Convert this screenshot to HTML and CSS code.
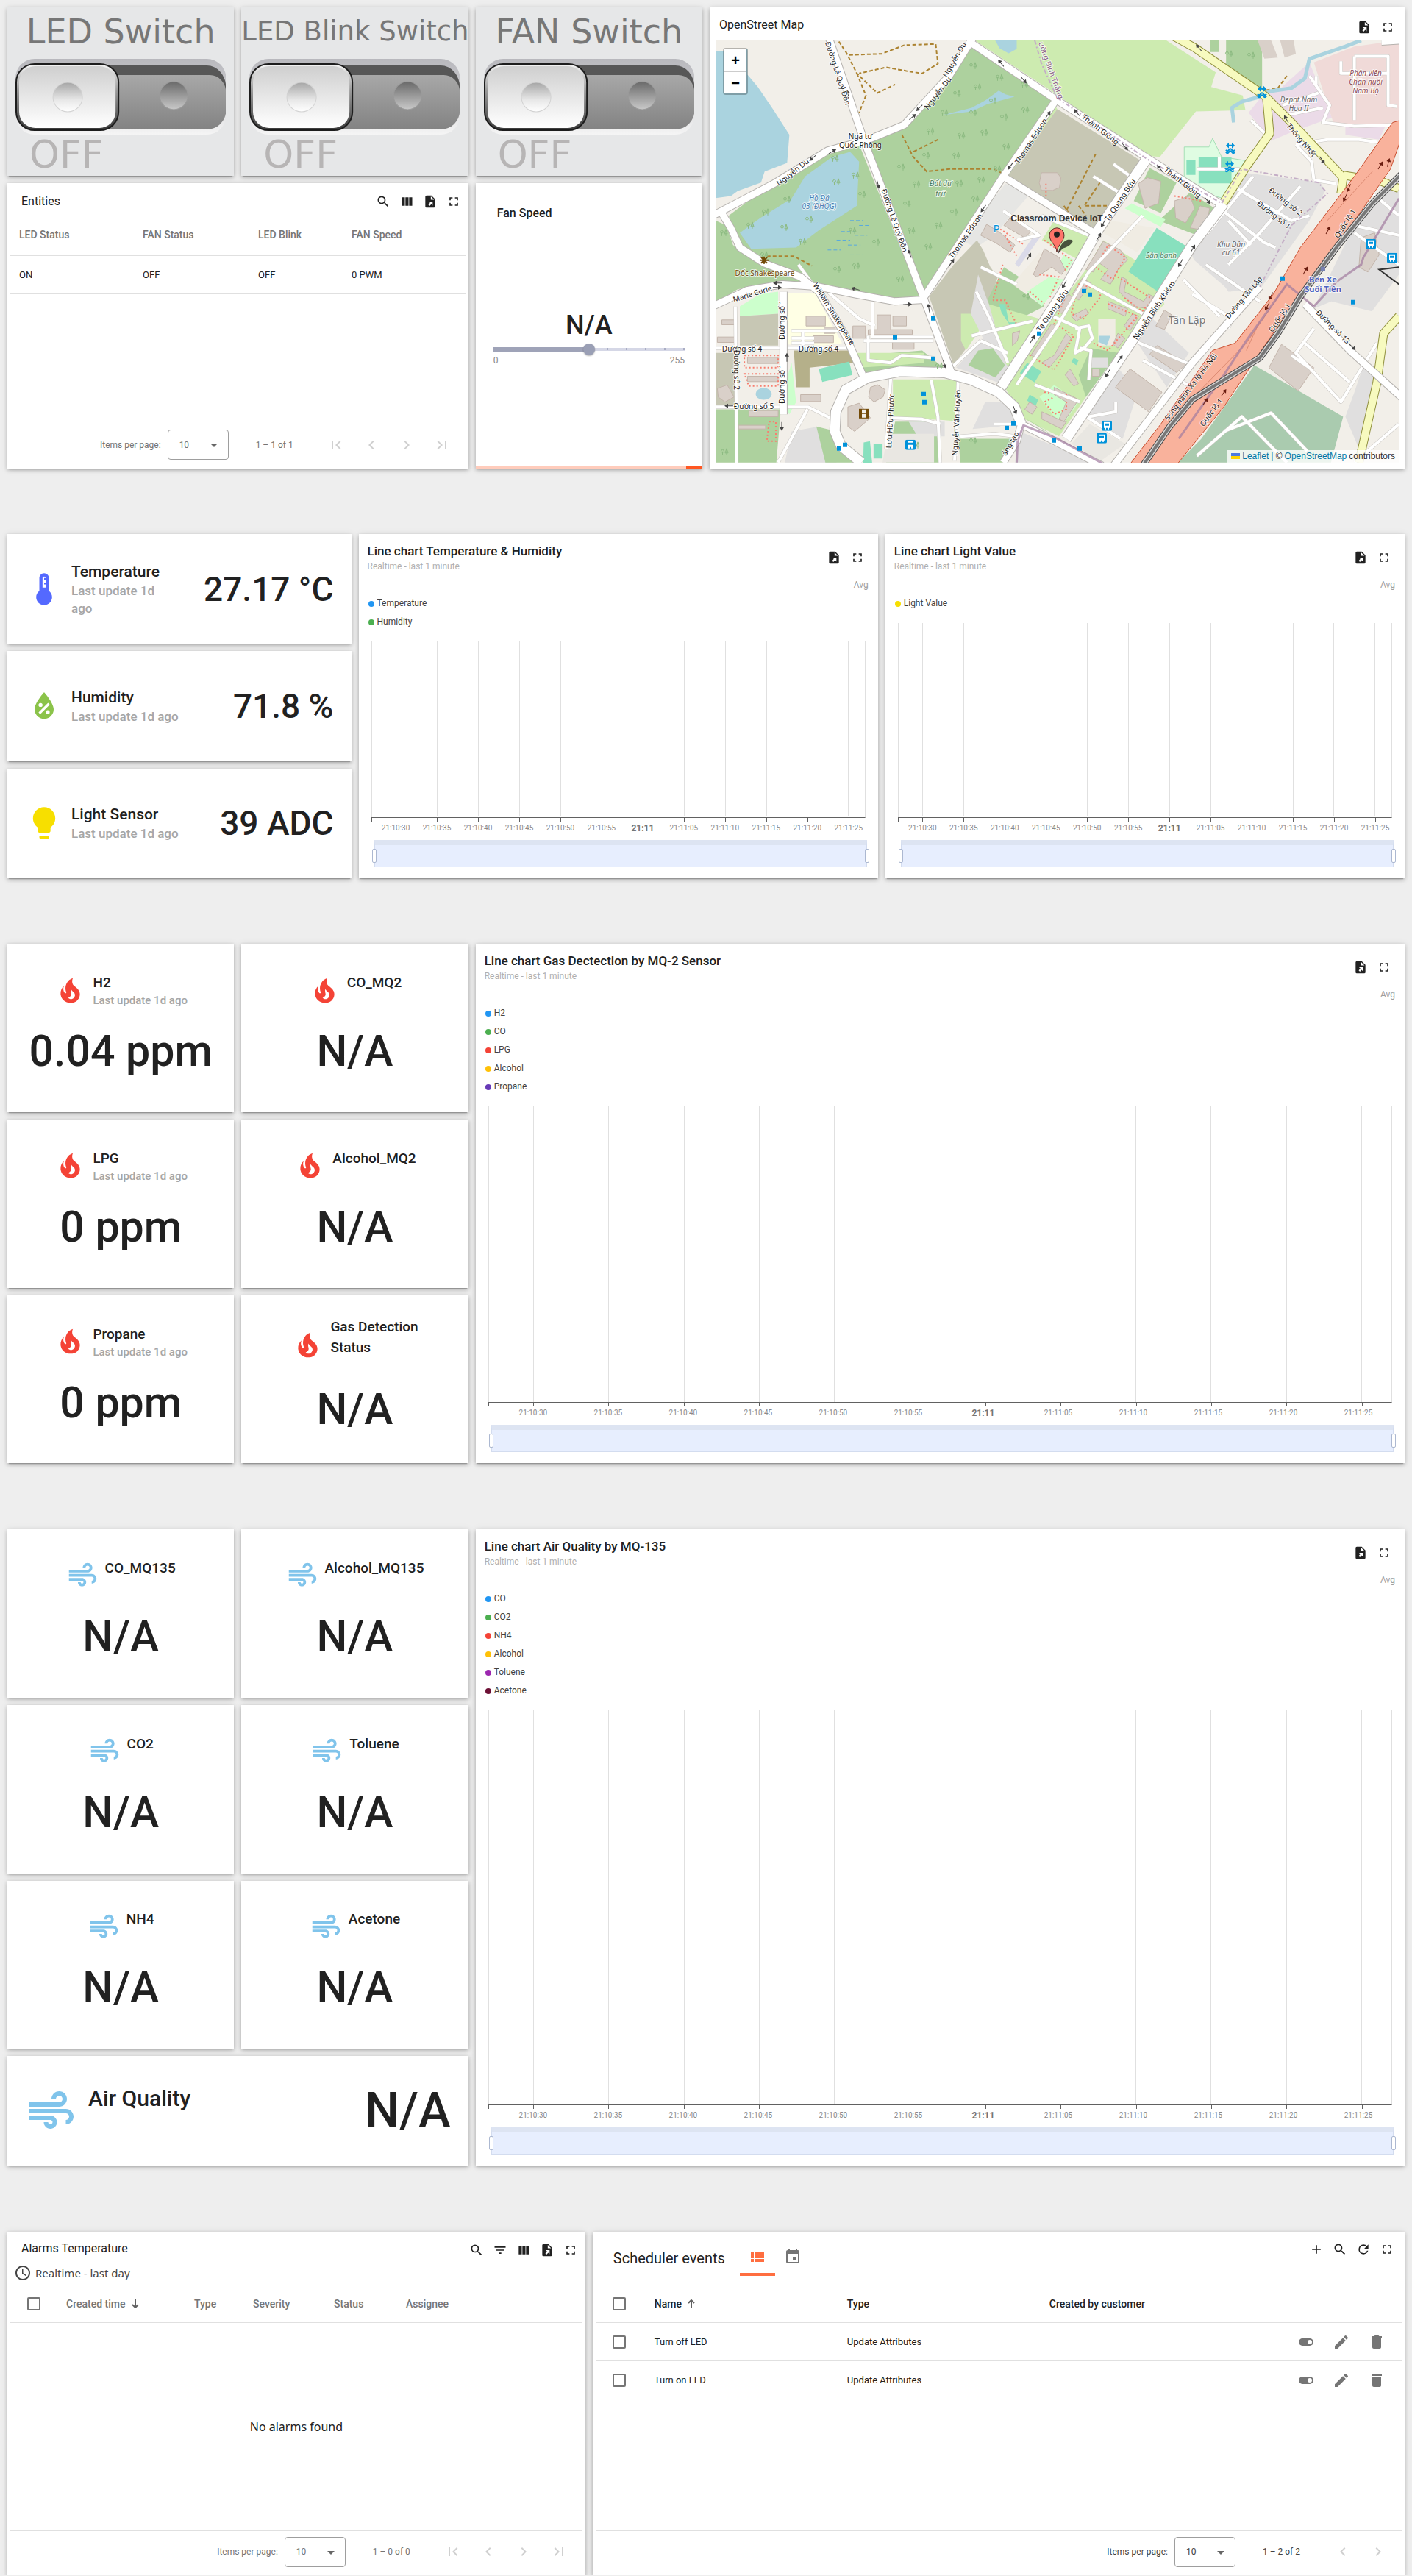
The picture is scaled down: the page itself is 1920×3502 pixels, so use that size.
FILE: index.html
```html
<!DOCTYPE html>
<html lang="en">
<head>
<meta charset="utf-8">
<title>Classroom IoT Dashboard</title>
<link rel="stylesheet" href="styles.css">
</head>
<body>
<svg class="defs" aria-hidden="true">
  <defs>
    <symbol id="i-search" viewBox="0 0 24 24"><path d="M15.5 14h-.79l-.28-.27A6.47 6.47 0 0 0 16 9.5 6.5 6.5 0 1 0 9.5 16c1.61 0 3.09-.59 4.23-1.57l.27.28v.79l5 4.99L20.49 19l-4.99-5zm-6 0C7.01 14 5 11.99 5 9.5S7.01 5 9.5 5 14 7.01 14 9.5 11.99 14 9.5 14z"/></symbol>
    <symbol id="i-columns" viewBox="0 0 24 24"><path d="M10 19h5V5h-5v14zm-6 0h5V5H4v14zM16 5v14h5V5h-5z"/></symbol>
    <symbol id="i-filter" viewBox="0 0 24 24"><path d="M10 18h4v-2h-4v2zM3 6v2h18V6H3zm3 7h12v-2H6v2z"/></symbol>
    <symbol id="i-export" viewBox="0 0 24 24"><path d="M14 2H6a2 2 0 0 0-2 2v16a2 2 0 0 0 2 2h12a2 2 0 0 0 2-2V8l-6-6zm2 16.5-2.2-2.2-2.8 2.8L9 17l2.8-2.8L9.500 12H16v6.500zM13 9V3.500L18.500 9H13z"/></symbol>
    <symbol id="i-full" viewBox="0 0 24 24"><path d="M7 14H5v5h5v-2H7v-3zm-2-4h2V7h3V5H5v5zm12 7h-3v2h5v-5h-2v3zM14 5v2h3v3h2V5h-5z"/></symbol>
    <symbol id="i-plus" viewBox="0 0 24 24"><path d="M19 13h-6v6h-2v-6H5v-2h6V5h2v6h6v2z"/></symbol>
    <symbol id="i-refresh" viewBox="0 0 24 24"><path d="M17.650 6.350A7.960 7.960 0 0 0 12 4a8 8 0 1 0 7.730 10h-2.080A6 6 0 1 1 12 6c1.660 0 3.140.69 4.220 1.780L13 11h7V4l-2.350 2.350z"/></symbol>
    <symbol id="i-clock" viewBox="0 0 24 24"><path d="M11.990 2C6.470 2 2 6.480 2 12s4.470 10 9.990 10C17.520 22 22 17.520 22 12S17.520 2 11.990 2zM12 20a8 8 0 1 1 0-16 8 8 0 0 1 0 16zm.5-13H11v6l5.250 3.150.75-1.230-4.500-2.670z"/></symbol>
    <symbol id="i-list" viewBox="0 0 24 24"><path d="M3 14h4v-4H3v4zm0 5h4v-4H3v4zM3 9h4V5H3v4zm5 5h13v-4H8v4zm0 5h13v-4H8v4zM8 5v4h13V5H8z"/></symbol>
    <symbol id="i-event" viewBox="0 0 24 24"><path d="M17 12h-5v5h5v-5zM16 1v2H8V1H6v2H5c-1.110 0-1.990.9-1.990 2L3 19a2 2 0 0 0 2 2h14c1.100 0 2-.9 2-2V5c0-1.100-.9-2-2-2h-1V1h-2zm3 18H5V8h14v11z"/></symbol>
    <symbol id="i-toggle" viewBox="0 0 24 24"><path fill-rule="evenodd" d="M17 7H7a5 5 0 0 0 0 10h10a5 5 0 0 0 0-10zm0 8a3 3 0 1 1 0-6 3 3 0 0 1 0 6z"/></symbol>
    <symbol id="i-edit" viewBox="0 0 24 24"><path d="M3 17.250V21h3.750L17.810 9.940l-3.750-3.750L3 17.250zM20.710 7.040a1 1 0 0 0 0-1.410l-2.340-2.340a1 1 0 0 0-1.410 0l-1.830 1.830 3.750 3.750 1.830-1.830z"/></symbol>
    <symbol id="i-trash" viewBox="0 0 24 24"><path d="M6 19c0 1.100.9 2 2 2h8c1.100 0 2-.9 2-2V7H6v12zM19 4h-3.500l-1-1h-5l-1 1H5v2h14V4z"/></symbol>
    <symbol id="i-first" viewBox="0 0 24 24"><path d="M18.410 16.590 13.820 12l4.590-4.590L17 6l-6 6 6 6zM6 6h2v12H6z"/></symbol>
    <symbol id="i-prev" viewBox="0 0 24 24"><path d="M15.410 7.410 14 6l-6 6 6 6 1.410-1.410L10.830 12z"/></symbol>
    <symbol id="i-next" viewBox="0 0 24 24"><path d="M10 6 8.590 7.410 13.170 12l-4.580 4.590L10 18l6-6z"/></symbol>
    <symbol id="i-last" viewBox="0 0 24 24"><path d="M5.590 7.410 10.180 12l-4.590 4.590L7 18l6-6-6-6zM16 6h2v12h-2z"/></symbol>
    <symbol id="i-caret" viewBox="0 0 10 5"><path d="M0 0h10L5 5z"/></symbol>
    <symbol id="i-up" viewBox="0 0 12 12"><path d="M6 12V1M2 5l4-4 4 4" fill="none" stroke="currentColor" stroke-width="2"/></symbol>
    <symbol id="i-down" viewBox="0 0 12 12"><path d="M6 0v11M2 7l4 4 4-4" fill="none" stroke="currentColor" stroke-width="2"/></symbol>
    <symbol id="i-thermo" viewBox="0 0 24 24"><path d="M15 13V5c0-1.660-1.340-3-3-3S9 3.340 9 5v8c-1.210.91-2 2.370-2 4 0 2.760 2.240 5 5 5s5-2.240 5-5c0-1.630-.79-3.090-2-4zm-4-8c0-.55.45-1 1-1s1 .45 1 1h-1v1h1v2h-1v1h1v2h-2V5z"/></symbol>
    <symbol id="i-drop" viewBox="0 0 24 24"><path d="M12 3.250S6 10 6 14c0 3.320 2.690 6 6 6a6 6 0 0 0 6-6c0-4-6-10.750-6-10.750zm2.470 6.720 1.060 1.060-6 6-1.060-1.060zM9.750 10a1.250 1.250 0 1 1 0 2.500 1.250 1.250 0 0 1 0-2.500zm4.500 4.500a1.250 1.250 0 1 1 0 2.500 1.250 1.250 0 0 1 0-2.500z" fill-rule="evenodd"/></symbol>
    <symbol id="i-bulb" viewBox="0 0 24 24"><path d="M9 21c0 .55.45 1 1 1h4c.55 0 1-.45 1-1v-1H9v1zm3-19C8.140 2 5 5.140 5 9c0 2.380 1.190 4.470 3 5.740V17c0 .55.45 1 1 1h6c.55 0 1-.45 1-1v-2.260c1.810-1.270 3-3.360 3-5.740 0-3.860-3.140-7-7-7z"/></symbol>
    <symbol id="i-fire" viewBox="0 0 24 24"><path fill-rule="evenodd" d="M17.66 11.2C17.43 10.9 17.15 10.64 16.89 10.38C16.22 9.78 15.46 9.35 14.82 8.72C13.33 7.26 13 4.85 13.95 3C13 3.23 12.17 3.75 11.46 4.32C8.87 6.4 7.85 10.07 9.07 13.22C9.11 13.32 9.15 13.42 9.15 13.55C9.15 13.77 9 13.97 8.8 14.05C8.57 14.15 8.33 14.09 8.14 13.93C8.08 13.88 8.04 13.83 8 13.76C6.87 12.33 6.69 10.28 7.45 8.64C5.78 10 4.87 12.3 5 14.47C5.06 14.97 5.12 15.47 5.29 15.97C5.43 16.57 5.7 17.17 6 17.7C7.08 19.43 8.95 20.67 10.96 20.92C13.1 21.19 15.39 20.8 17.03 19.32C18.86 17.66 19.5 15 18.56 12.72L18.43 12.46C18.22 12 17.66 11.2 17.66 11.2M14.5 17.5C14.22 17.74 13.76 18 13.4 18.1C12.28 18.5 11.16 17.94 10.5 17.28C11.69 17 12.4 16.12 12.61 15.23C12.78 14.43 12.46 13.77 12.33 13C12.21 12.26 12.23 11.63 12.5 10.94C12.69 11.32 12.89 11.7 13.13 12C13.9 13 15.11 13.44 15.37 14.8C15.41 14.94 15.43 15.08 15.43 15.23C15.46 16.05 15.1 16.95 14.5 17.5Z"/></symbol>
    <symbol id="i-air" viewBox="0 0 24 24"><path d="M14.500 17c0 1.650-1.350 3-3 3s-3-1.350-3-3h2c0 .55.45 1 1 1s1-.45 1-1-.45-1-1-1H2v-2h9.500c1.650 0 3 1.350 3 3zM19 6.500C19 4.570 17.430 3 15.500 3S12 4.570 12 6.500h2c0-.83.67-1.500 1.500-1.500s1.500.67 1.500 1.500S16.330 8 15.500 8H2v2h13.500c1.930 0 3.500-1.570 3.500-3.500zm-.5 4.500H2v2h16.500c.83 0 1.500.67 1.500 1.500s-.67 1.500-1.500 1.500v2c1.930 0 3.500-1.570 3.500-3.500S20.430 11 18.500 11z"/></symbol>

    <linearGradient id="g-case" x2="0" y2="1"><stop offset="0" stop-color="#b8b8bd"/><stop offset=".5" stop-color="#d0d0d3"/><stop offset="1" stop-color="#f5f5f5"/></linearGradient>
    <linearGradient id="g-slot" x2="0" y2="1"><stop offset="0" stop-color="#a8a8a8"/><stop offset="1" stop-color="#838383"/></linearGradient>
    <linearGradient id="g-rim" x2="0" y2="1"><stop offset="0" stop-color="#f6f6f6"/><stop offset=".4" stop-color="#9a9a9a"/><stop offset="1" stop-color="#3a3a3a"/></linearGradient>
    <linearGradient id="g-knob" x2="0" y2="1"><stop offset="0" stop-color="#cfcfcf"/><stop offset="1" stop-color="#fff"/></linearGradient>
    <linearGradient id="g-dimple" x2="0" y2="1"><stop offset="0" stop-color="#a6a6a6"/><stop offset=".6" stop-color="#e8e8e8"/><stop offset="1" stop-color="#fff"/></linearGradient>
    <linearGradient id="g-hole" x2="0" y2="1"><stop offset="0" stop-color="#6a6a6a"/><stop offset="1" stop-color="#c9c9c9"/></linearGradient>
    <symbol id="toggle-art" viewBox="0 0 286 103" preserveAspectRatio="none">
      <rect width="286" height="103" rx="26" fill="url(#g-case)"/>
      <path d="M20 9h240a26 30 0 0 1 26 30v20H0V39z" fill="#575757"/>
      <path d="M100 22h164a22 24 0 0 1 22 24v24a26 26 0 0 1-26 26H100z" fill="url(#g-slot)"/>
      <rect x="1" y="7" width="139" height="90" rx="25" fill="url(#g-rim)" stroke="#1d1d1d" stroke-width="2"/>
      <rect x="5" y="10" width="131" height="84" rx="22" fill="url(#g-knob)"/>
      <circle cx="71" cy="52" r="20" fill="url(#g-dimple)" stroke="#d2d2d2"/>
      <circle cx="215" cy="50" r="19" fill="url(#g-hole)" stroke="#9a9a9a"/>
    </symbol>

    <g id="chart-grid">
      <path d="M0 0V2000"/>
      <line x1="5%" x2="5%" y2="100%"/><line x1="13.333%" x2="13.333%" y2="100%"/><line x1="21.667%" x2="21.667%" y2="100%"/><line x1="30%" x2="30%" y2="100%"/><line x1="38.333%" x2="38.333%" y2="100%"/><line x1="46.667%" x2="46.667%" y2="100%"/><line x1="55%" x2="55%" y2="100%"/><line x1="63.333%" x2="63.333%" y2="100%"/><line x1="71.667%" x2="71.667%" y2="100%"/><line x1="80%" x2="80%" y2="100%"/><line x1="88.333%" x2="88.333%" y2="100%"/><line x1="96.667%" x2="96.667%" y2="100%"/>
    </g>
    <path id="tree" d="M3.500 11V6M1.500 6a2 2.500 0 1 1 4 0c0 1.500-4 1.500-4 0zM9 11V3M9 2 7 8h4z"/>
    <path id="arrow" d="M0 2.500h7V0l5 3-5 3V3.500H0z"/>
    <symbol id="bus" viewBox="0 0 14 14"><rect width="14" height="14" rx="2" fill="#0092da"/><path d="M3 2h8v8H3zM4 10h2v2H4zM8 10h2v2H8z" fill="#fff"/><path d="M4 4h6v3H4z" fill="#0092da"/></symbol>
  </defs>
</svg>

<main class="dashboard">

<section class="group">
  <article class="card w4 h3 switch">
    <h2 class="switch-title">LED Switch</h2>
    <button class="switch-btn" role="switch" aria-checked="false" aria-label="LED Switch"><svg><use href="#toggle-art"/></svg></button>
    <p class="switch-state">OFF</p>
  </article>
  <article class="card w4 h3 switch">
    <h2 class="switch-title small">LED Blink Switch</h2>
    <button class="switch-btn" role="switch" aria-checked="false" aria-label="LED Blink Switch"><svg><use href="#toggle-art"/></svg></button>
    <p class="switch-state">OFF</p>
  </article>
  <article class="card w4 h3 switch">
    <h2 class="switch-title">FAN Switch</h2>
    <button class="switch-btn" role="switch" aria-checked="false" aria-label="FAN Switch"><svg><use href="#toggle-art"/></svg></button>
    <p class="switch-state">OFF</p>
  </article>

  <article class="card w12 h8 map-card">
    <header class="bar map-bar">
      <h2 class="title">OpenStreet Map</h2>
      <div class="tools">
        <button aria-label="Export"><svg><use href="#i-export"/></svg></button>
        <button aria-label="Fullscreen"><svg><use href="#i-full"/></svg></button>
      </div>
    </header>
    <div class="map">
      <svg class="map-art" viewBox="0 0 929 574" preserveAspectRatio="xMidYMid slice">
        <rect width="929" height="574" fill="#f2efe9"/>
        <g class="terrain" transform="translate(-12.900 -55) scale(.6122 .33333)">
          <!-- water and woodland -->
          <path class="water" d="M21 210 92 200 92 305 115 355 150 450 185 550 180 665 130 700 122 745 70 780 55 800 21 808z"/>
          <path class="wood" d="M587 185 775 415 660 715 490 1205 345 580 420 520 500 410 545 300z"/>
          <path class="wood" d="M340 590 480 1225 430 1235 330 1190 240 1170 130 1070 75 990 50 880 130 770 270 630z"/>
          <path class="wood" d="M21 900 45 920 60 1000 125 1075 205 1135 215 1155 150 1155 70 1180 21 1235z"/>
          <path class="water" d="M280 640 320 620 340 660 335 840 250 940 200 1010 100 1015 75 950 120 890 190 810 220 720z"/>
          <path class="water" d="M525 470 590 440 620 410 650 370 665 385 685 395 625 425 590 455z"/>
          <path class="grass" d="M597 165h425l110 130-10 60 70 35 6 60-110 5-80 185-35-5-195-250z"/>
          <path class="water" d="M642 165h48v35l-18 18-20-20z"/>
          <path class="grass" d="M600 165h38v40z"/>
          <path d="M1120 165h20v48h-20zM1155 165h80v200l-20 10-60-110z" fill="#add19e"/>
          <path d="M1225 165h30l15 70-30 5zM1275 165h30l5 55-25 15z" fill="#d9d0c9"/>
          <path class="brown" d="M780 445 965 655 862 945 665 720z"/>
          <path class="grass" d="M665 735 780 445 775 430 655 730z"/>
          <path d="M1205 460 1240 380 1270 370 1340 255 1390 480 1300 540 1255 575z" fill="#ebdbe8"/>
          <path d="M1350 255 1440 190 1539 165v330l-40 15-105-5z" fill="#f0dad8"/>
          <path d="M1420 510h90l-15 60-75-20z" fill="#ebdbe8"/>
          <path d="M1062 600h55l8-35 20 75 52 15-48 155-37-20-50-60z" fill="#dffce2" stroke="#a5dfb5"/>
          <path class="pitch" d="M1067 652h20v62h-20zM1094 642h73v106h-73z"/>
          <path class="resid" d="M1195 705 1365 745 1375 780 1340 900 1230 1180 1160 1190 1090 1000 1150 820z"/>
          <path class="resid" d="M1450 880 1539 720v400l-60 150-90-40-40 30z" fill="#e7e4dd"/>
          <path class="wood" d="M985 685 1045 745 1010 870 950 820zM1075 785 1130 850 1090 960 1005 900z"/>
          <path d="M945 830 1020 895 1010 925 930 850z" fill="#cfc"/>
          <path d="M665 750 720 790 640 960 600 1010 565 980z" fill="#e6e6e4"/>

          <!-- lower-left quarter -->
          <path class="wood" d="M480 1430 540 1520 350 1540 345 1450zM21 1670h145l-10 217H21z"/>
          <path class="campus" d="M182 1195h60l60 205-40 10-80-5z"/>
          <path d="M75 1250 120 1200 160 1190v90l-85 10zM190 1480l10 160-15 50-20-60z" fill="#cfc"/>
          <path class="brown" d="M75 1290 160 1280v130H75zM21 1440h50v220H21z"/>
          <path d="M195 1430h125l10 50-100 20v80H200z" fill="#b5b08a"/>
          <path class="pitch" d="M250 1505 318 1475 325 1530 258 1558zM350 1805l14-5 5 90h-20zM372 1810h20v60h-20z"/>
          <path class="grass" d="M335 1440h150v40l-60 10-85 10z"/>
          <path class="grass" d="M415 1548h140v170l-35-5-105-8zM500 1550h58v160h-40z"/>
          <path class="wood" d="M420 1720h100v167H400zM560 1790h120l-20 97h-95z"/>
          <path class="resid" d="M450 1720h80v60h-60zM620 1640h60l12 70-40 30-60 10zM190 1760l60-20 40 147h-115z"/>
          <path class="wood" d="M245 1740 290 1760 325 1887h-60z"/>

          <!-- campus strip between the two long avenues -->
          <g transform="translate(392 840) scale(.5444 1)">
            <path class="brown" d="M385 140 410 180 440 250 470 290 410 470 350 570 290 650 190 370 290 240z"/>
            <path class="wood" d="M495 250 620 330 660 410 560 460 450 470 430 380z"/>
            <path class="grass" d="M430 400 640 460 590 640 500 740 460 560zM320 440h60l20 60-60 90-20-40z"/>
            <path class="resid" d="M390 280 440 420 500 640 540 690 470 720 300 660 410 540 360 440z"/>
            <path class="wood" d="M390 590 450 580 500 650 460 700 350 650z"/>
            <path class="grass" d="M700 60 850 130 800 220 650 140zM830 260 900 140 1060 240 1150 400 960 600 900 640 830 780 720 940 560 860 500 740 700 430z"/>
            <path class="wood" d="M850 580 960 600 830 780 800 690zM570 860 700 940 640 900z"/>
            <path class="resid" d="M850 620h70v40h-70z"/>
            <path d="M640 190 790 270 720 330 640 400 530 320zM880 460h70v110h-70zM930 60 1110 90 1040 190 900 110z" fill="#f0ece3"/>
            <path d="M590 350 680 290 740 300 650 410zM740 200l40 20-30 50-40-20zM640 780 700 730 800 800 730 900z" fill="#cfc"/>
            <path class="pitch" d="M1118 90 1240 165 1120 348 1003 268z"/>
            <path class="pitch" d="M590 640 648 675 620 720 560 682zM475 400h25l15 75 30 0-20 20-40-60zM600 770l35 20-10 25-35-20zM780 620l20 10-10 20-20-15zM565 985h30l-5 50h-25z"/>
            <path class="bldg" d="M425 75 480 110 540 160 520 190 460 150 400 120zM520 50 610 100 580 130 495 80zM660 175 720 210 745 260 730 280 690 250 630 290 615 280zM815 295l35 20-50 70-25-25zM760 360l20 20-50 60-20-20zM900 145 970 180 1000 220 960 260 930 320 890 300 920 260 880 230 860 270 830 260zM975 290l20 10-10 50 80 40 20-30 20 10-20 50-60-10-60-60zM920 390l80 30-10 30-70-30zM1020 440l25 10-35 60-25-20zM960 520l30 20-30 40-20-15zM690 480l15 10-70 130-30-10zM750 520l20 20-40 60 -50 60-30-20 50-30zM830 420l10 20-50 30-20-20zM530 520l30-10-10 40-20 20zM700 740 800 790 740 880 720 870 750 800 700 770zM650 840 740 880 750 880 730 910 650 870zM600 800l30 20-20 30-30-20zM745 690l20-25 35 60-20 10zM855 665h30v30h-30z"/>
            <path class="resid" d="M1080 440 1250 600 1160 740 1040 560zM1250 170 1370 60 1500 190 1420 350 1270 220zM850 820l110-160 80 100-60 190-140-90z"/>
            <path class="bldg" d="M1010 665 1140 760 1085 840 950 740zM1120 570 1240 645 1200 680 1090 605zM1150 425l30 20-30 60-35-15zM1295 0l40 10-20 90-60-10z"/>
            <path d="M845 890 990 970 890 1040 770 970zM20 930h190v117H0z" fill="#e9e7e2"/>
            <path d="M560 920 860 1047H540z" class="resid"/>
            <path class="water" d="M885 530h45l-15 40-35-15z"/>
            <path d="M625 110l20 15-90 125-15-15z" fill="#dadae8"/>
            <path class="foot" d="M480 95 580 160M500 120 550 210M490 240 450 385M450 385H500L550 490M870 250 920 160 990 210 940 300zM800 320 880 340 890 370 820 460 770 440zM720 490 780 530 700 670 600 610M760 340 700 480M960 290 1100 380 1060 430 980 370M920 400 1040 450 920 590 860 560M660 760 750 770 750 830 700 850 660 800 700 780M600 350 660 400M640 280 720 290 680 380M660 140 770 220 740 270"/>
            <path class="track" d="M740 0l20 30M800 0l30 40"/>
          </g>

          <!-- cemetery and south-east blocks -->
          <path d="M1218 1490 1415 1700 1388 1887H1048L1100 1790z" fill="#aacbaf"/>
          <path class="resid" d="M1460 1490 1500 1570 1450 1830 1420 1700 1440 1600z"/>
          <path class="bldg" d="M1278 1405 1350 1500 1315 1595 1250 1500z"/>
          <path class="bldg" d="M222 1290h43v40h-43zM262 1335h25v25h-25zM238 1370h45v28h-45zM380 1285h30v60h48v20h-98v-20h20zM415 1290h30v40h-30zM414 1395h48v30h-48zM326 1330h28v50h-28zM92 1458h68v25H92zM92 1535h68v22H92zM210 1610h45v28h-45zM315 1660l25-15 25 60-35 55-15-20zM365 1580l16-10 17 20-5 30-20 20-12-20zM95 1675h65v25H95zM72 1735h60v15H72zM25 1585l22-15 15 50-20 20-15-20zM35 1305h30v20H35zM25 1375h38v22H25z"/>
          <path class="bldg" d="M960 750 980 725 1010 740 1005 830 975 850zM1040 820l35-20 10 50-20 60-22-20zM1455 970l30-20 10 90-25 70-20-20z"/>
          <path class="bldg" d="M745 705h35l8 20-3 40-15 12h-25l-5-30z"/>
          <ellipse cx="128" cy="1607" rx="18" ry="24" class="water"/>
          <path class="track" d="M295 170 315 225 390 220 440 185 510 180 515 260 480 300 445 290 400 275 340 300M310 210 335 300 380 380 420 345M335 300 355 390 340 460M435 550 460 640 490 700 540 690 640 690 660 710M515 570 460 620M865 630 800 860M875 745 840 840 890 840M135 1045h60l40 40M1290 310 1270 360 1240 370"/>
          <path class="wave" d="M320 900h28M340 920h25M300 945h30M330 960h28M290 980h30M315 1000h28M270 1020h30M320 1040h28"/>
          <path d="M1455 165 1420 190 1340 240 1330 320 1300 360 1245 375M1230 395 1190 415 1168 440 1172 500" fill="none" stroke="#aad3df" stroke-width="5"/>
          <path class="foot" d="M85 1450h75v50H85zM85 1525h75v50H95zM140 1720h15v80h-20zM1040 800l60 20M755 750v70"/>
          <path class="boundary" d="M730 165 745 260 780 400"/>

          <!-- minor streets -->
          <g id="streets-b" class="lines">
            <path d="M860 720 930 800M905 670 950 730M660 860 740 960 690 980M745 880 850 960M1130 835 1240 990 1265 1010M1180 770 1300 900 1340 880M1215 720 1140 890 1110 960M1320 760 1230 950 1160 1080M1160 900 1210 1000M1090 690h95M1140 640v50"/>
            <path d="M1355 345v-35M1340 310 1385 430 1370 500 1440 515 1539 510M1440 230h75v200l20 5M1440 230v260M1410 250v50h105M1280 430 1360 380M1290 470 1370 440M1310 590 1380 570 1450 570 1490 580M1310 590 1345 660 1350 735M1210 490 1250 560"/>
            <path d="M1480 790 1539 880M1440 950 1539 1080M1350 735 1400 750M1440 920 1539 960"/>
            <path d="M21 1420h310M21 1660h205l55 50M225 1670 160 1887M65 1250 68 1890M370 1225v150h135M350 1390h155M410 1545 400 1830M560 1550 552 1880M360 1370v100l50 10 25-30 70 10M500 1550 515 1700 520 1887M410 1705 480 1710 520 1730M565 1780 640 1770 690 1780M640 1730h60M190 1350h110M190 1380h50M190 1400h50M215 1350v60"/>
            <path d="M600 1190 630 1300 670 1480M590 1370 725 1310M610 1390 670 1440M545 1500 610 1390M610 1090 690 1160M840 1150 970 1280M970 880 850 1110 780 1330 690 1570M770 1290 830 1340 820 1440 840 1420 858 1380 850 1330 820 1340M830 1420 855 1430 850 1550M730 1570 830 1640"/>
            <path d="M1060 1140 1140 1290M950 1390 1080 1490M970 1470 1080 1580M1080 1200 1160 1290M1110 1080 1230 1230M845 1700 920 1790M850 1700 910 1680v-40"/>
            <path d="M1350 1340 1310 1440 1410 1640 1490 1400M1330 1400 1430 1560M1390 1370 1460 1480M1300 1450 1340 1500M1160 1340 1180 1250 1230 1180M1090 1860 1190 1700 1290 1887M1150 1760 1255 1685 1335 1840M1440 1887 1539 1730"/>
            <path d="M205 1080 245 1180M270 1190 340 1300 375 1330"/>
          </g>
          <g id="yellow-b" class="lines">
            <path d="M1040 150 1085 195 1240 390 1300 500 1415 725 1410 790M1245 400 1252 545 1200 680 1148 830M1415 715 1500 740 1539 770M1539 1290 1505 1360 1490 1560 1450 1887"/>
          </g>
          <g id="avenues" class="lines">
            <path d="M272 150 350 570 480 1200 545 1520M595 150 540 310 480 430 440 510 360 570 270 615 150 750 15 880M35 870 55 930 75 1010 130 1075 210 1130 250 1190 310 1370 350 1540M580 165 780 410 980 645 1145 835M775 415 660 720 485 1210M660 720 862 950M15 1250 90 1185 170 1160 250 1170 330 1200 420 1230 490 1222M172 1190V1690M1540 165 1500 170M1230 1170 1080 1480 905 1900M1330 1240 1430 1430 1550 1630M700 1730 880 1900M700 1730 690 1800 660 1887"/>
          </g>
          <g id="avenues-wide" class="lines">
            <path d="M980 645 870 940 790 1200 655 1580M1150 830 1080 1000 950 1380 800 1790M345 1887 300 1820 286 1760 288 1680 310 1590 360 1540 430 1515 530 1520 590 1550 650 1600 685 1660 700 1730"/>
          </g>
          <g id="rail" class="lines"><path d="M1545 710 1480 830 1400 1010 1320 1210 1270 1360 1230 1460 1150 1550 1080 1630 1030 1740 970 1900"/></g>
          <path d="M1539 1090 1495 1100 1539 1160" fill="none" stroke="#333" stroke-width="2"/>

          <!-- road casings first, then road surfaces -->
          <use href="#streets-b" stroke="#c9c6c2" stroke-width="5"/><use href="#streets-b" stroke="#fff" stroke-width="4"/>
          <use href="#yellow-b" stroke="#8f8f3c" stroke-width="12"/><use href="#yellow-b" stroke="#f7fabf" stroke-width="10"/>
          <use href="#avenues" stroke="#b5b2ae" stroke-width="11"/><use href="#avenues-wide" stroke="#b5b2ae" stroke-width="15"/>
          <use href="#avenues" stroke="#fff" stroke-width="9"/><use href="#avenues-wide" stroke="#fff" stroke-width="13"/>
          <path class="boundary" d="M780 400 980 650 1145 830 1190 690 1360 745 1380 790 1300 920 1230 1170"/>
          <path class="purple" d="M690 1887 692 1800 705 1735 780 1790 880 1890M1539 810 1460 1050 1455 1080 1400 1150 1350 1250"/>
          <path d="M1545 490 1525 500 1440 720 1320 1010 1260 1200 1175 1400 1125 1430 1010 1730 943 1890H1048L1150 1660 1215 1480 1300 1250 1410 980 1520 690 1545 560z" fill="#f9b29c" stroke="#c84e2f"/>
          <path d="M1480 700 1380 900M1290 1160 1200 1400 1040 1700M1230 1310 1200 1430" fill="none" stroke="#dc8a72"/>
          <path class="purple" d="M1350 1250 1290 1160 1200 1390 1150 1530 1050 1790"/>
          <use href="#rail" stroke="#444" stroke-width="9"/><use href="#rail" stroke="#d5d5d5" stroke-width="7"/><use href="#rail" stroke="#777" stroke-width="4"/>
        </g>

        <g class="trees">
          <use href="#tree" x="344" y="28"/><use href="#tree" x="380" y="44"/><use href="#tree" x="350" y="57"/><use href="#tree" x="322" y="66"/><use href="#tree" x="414" y="54"/><use href="#tree" x="305" y="92"/><use href="#tree" x="344" y="92"/><use href="#tree" x="371" y="76"/><use href="#tree" x="415" y="88"/><use href="#tree" x="386" y="98"/><use href="#tree" x="286" y="117"/><use href="#tree" x="328" y="123"/><use href="#tree" x="359" y="119"/><use href="#tree" x="280" y="150"/><use href="#tree" x="321" y="150"/><use href="#tree" x="389" y="138"/><use href="#tree" x="246" y="166"/><use href="#tree" x="377" y="168"/><use href="#tree" x="267" y="189"/><use href="#tree" x="325" y="188"/><use href="#tree" x="355" y="183"/><use href="#tree" x="254" y="216"/><use href="#tree" x="318" y="227"/><use href="#tree" x="347" y="209"/><use href="#tree" x="297" y="245"/><use href="#tree" x="260" y="252"/><use href="#tree" x="283" y="274"/><use href="#tree" x="156" y="154"/><use href="#tree" x="184" y="177"/><use href="#tree" x="158" y="186"/><use href="#tree" x="193" y="203"/><use href="#tree" x="91" y="210"/><use href="#tree" x="62" y="227"/><use href="#tree" x="121" y="237"/><use href="#tree" x="41" y="245"/><use href="#tree" x="87" y="248"/><use href="#tree" x="112" y="267"/><use href="#tree" x="180" y="252"/><use href="#tree" x="212" y="268"/><use href="#tree" x="185" y="300"/><use href="#tree" x="159" y="305"/><use href="#tree" x="245" y="318"/><use href="#tree" x="5" y="255"/><use href="#tree" x="60" y="285"/><use href="#tree" x="416" y="342"/><use href="#tree" x="298" y="436"/><use href="#tree" x="344" y="538"/><use href="#tree" x="6" y="553"/><use href="#tree" x="266" y="544"/><use href="#tree" x="692" y="12"/><use href="#tree" x="722" y="14"/>
        </g>
        <g class="arrows">
          <use href="#arrow" x="-6" y="-3" transform="translate(388 31) rotate(-130)"/><use href="#arrow" x="-6" y="-3" transform="translate(419 54) rotate(50)"/><use href="#arrow" x="-6" y="-3" transform="translate(491 98) rotate(-130)"/><use href="#arrow" x="-6" y="-3" transform="translate(557 145) rotate(50)"/><use href="#arrow" x="-6" y="-3" transform="translate(604 174) rotate(-130)"/><use href="#arrow" x="-6" y="-3" transform="translate(669 218) rotate(50)"/><use href="#arrow" x="-6" y="-3" transform="translate(452 101) rotate(-55)"/><use href="#arrow" x="-6" y="-3" transform="translate(401 171) rotate(125)"/><use href="#arrow" x="-6" y="-3" transform="translate(364 229) rotate(125)"/><use href="#arrow" x="-6" y="-3" transform="translate(180 73) rotate(-105)"/><use href="#arrow" x="-6" y="-3" transform="translate(221 196) rotate(75)"/><use href="#arrow" x="-6" y="-3" transform="translate(132 160) rotate(140)"/><use href="#arrow" x="-6" y="-3" transform="translate(159 151) rotate(-30)"/><use href="#arrow" x="-6" y="-3" transform="translate(277 92) rotate(135)"/><use href="#arrow" x="-6" y="-3" transform="translate(268 104) rotate(-40)"/><use href="#arrow" x="-6" y="-3" transform="translate(264 290) rotate(-110)"/><use href="#arrow" x="-6" y="-3" transform="translate(290 364) rotate(-100)"/><use href="#arrow" x="-6" y="-3" transform="translate(311 440) rotate(75)"/><use href="#arrow" x="-6" y="-3" transform="translate(84 330) rotate(180)"/><use href="#arrow" x="-6" y="-3" transform="translate(84 336) rotate(0)"/><use href="#arrow" x="-6" y="-3" transform="translate(190 338) rotate(-165)"/><use href="#arrow" x="-6" y="-3" transform="translate(261 359) rotate(-5)"/><use href="#arrow" x="-6" y="-3" transform="translate(321 302) rotate(-55)"/><use href="#arrow" x="-6" y="-3" transform="translate(527 249) rotate(120)"/><use href="#arrow" x="-6" y="-3" transform="translate(521 267) rotate(-60)"/><use href="#arrow" x="-6" y="-3" transform="translate(426 294) rotate(-60)"/><use href="#arrow" x="-6" y="-3" transform="translate(474 332) rotate(120)"/><use href="#arrow" x="-6" y="-3" transform="translate(431 406) rotate(-60)"/><use href="#arrow" x="-6" y="-3" transform="translate(649 283) rotate(-60)"/><use href="#arrow" x="-6" y="-3" transform="translate(632 303) rotate(120)"/><use href="#arrow" x="-6" y="-3" transform="translate(550 433) rotate(-55)"/><use href="#arrow" x="-6" y="-3" transform="translate(533 453) rotate(120)"/><use href="#arrow" x="-6" y="-3" transform="translate(407 503) rotate(70)"/><use href="#arrow" x="-6" y="-3" transform="translate(657 10) rotate(-130)"/><use href="#arrow" x="-6" y="-3" transform="translate(776 107) rotate(-120)"/><use href="#arrow" x="-6" y="-3" transform="translate(825 163) rotate(55)"/><use href="#arrow" x="-6" y="-3" transform="translate(866 417) rotate(45)"/><use href="#arrow" x="-6" y="-3" transform="translate(97 431) rotate(-90)"/><use href="#arrow" x="-6" y="-3" transform="translate(90 525) rotate(90)"/><use href="#arrow" x="-6" y="-3" transform="translate(18 497) rotate(180)"/>
          <g fill="#6b1d10"><use href="#arrow" x="-6" y="-3" transform="translate(904 170) rotate(-60)"/><use href="#arrow" x="-6" y="-3" transform="translate(915 166) rotate(-75)"/><use href="#arrow" x="-6" y="-3" transform="translate(861 201) rotate(115)"/><use href="#arrow" x="-6" y="-3" transform="translate(856 214) rotate(115)"/><use href="#arrow" x="-6" y="-3" transform="translate(833 258) rotate(-60)"/><use href="#arrow" x="-6" y="-3" transform="translate(802 313) rotate(-60)"/><use href="#arrow" x="-6" y="-3" transform="translate(755 348) rotate(120)"/><use href="#arrow" x="-6" y="-3" transform="translate(750 362) rotate(120)"/><use href="#arrow" x="-6" y="-3" transform="translate(666 491) rotate(-55)"/><use href="#arrow" x="-6" y="-3" transform="translate(691 479) rotate(-55)"/></g>
        </g>

        <g class="stops">
          <path d="M498 338h6v6h-6zM506 343h6v6h-6zM293 430h6v6h-6zM301 477h0M302 427h0M280 478h6v6h-6zM281 489h6v6h-6zM402 518h6v6h-6zM393 524h6v6h-6zM437 396h6v6h-6zM293 375h6v6h-6zM241 401h6v6h-6zM768 321h6v6h-6zM864 353h6v6h-6zM457 541h6v6h-6zM492 552h6v6h-6zM173 547h6v6h-6zM165 552h6v6h-6z"/>
          <use href="#bus" x="258" y="543" width="14" height="14"/><use href="#bus" x="525" y="517" width="14" height="14"/><use href="#bus" x="518" y="534" width="14" height="14"/><use href="#bus" x="884" y="270" width="14" height="14"/><use href="#bus" x="913" y="289" width="14" height="14"/>
          <path d="m737 66 4-4v3h4v-3l4 4-4 4v-3h-4v3zM694 143l4-4v3h4v-3l4 4-4 4v-3h-4v3zM693 168l4-4v3h4v-3l4 4-4 4v-3h-4v3z"/>
          <path d="M737 73q2 3 4 0t4 0 4 0M737 76q2 3 4 0t4 0 4 0M694 149q2 3 4 0t4 0 4 0M694 152q2 3 4 0t4 0 4 0M693 174q2 3 4 0t4 0 4 0M693 177q2 3 4 0t4 0 4 0" fill="none" stroke="#0092da" stroke-width="2"/>
          <path d="M66 294v10M60 299h12M62 295l8 8M70 295l-8 8" stroke="#734a08" stroke-width="2"/>
          <path d="M195 501h14v13h-14z" fill="#734a08"/><path d="M199 502h6v5h-6zM199 508h6v5h-6z" fill="#f2efe9"/>
          <path d="M823 308h6v6h-6z" fill="#7981b0"/>
        </g>

        <g class="labels">
          <text transform="translate(163 46) rotate(72)">Đường Lê Quý Đôn</text>
          <text transform="translate(328 28) rotate(-60)">Nguyễn Du</text>
          <text transform="translate(305 74) rotate(-52)">Nguyễn Du</text>
          <text x="197" y="134">Ngã tư</text><text x="197" y="146">Quốc Phòng</text>
          <text transform="translate(107 182) rotate(-38)">Nguyễn Du</text>
          <text class="lake" x="141" y="218">Hồ Đá</text><text class="lake" x="141" y="229">03 (ĐHQG)</text>
          <text class="area" x="306" y="198">Đất dự</text><text class="area" x="306" y="212">trữ</text>
          <text transform="translate(240 246) rotate(71)">Đường Lê Quý Đôn</text>
          <text transform="translate(432 139) rotate(-57)">Thomas Edison</text>
          <text transform="translate(343 268) rotate(-55)">Thomas Edison</text>
          <text transform="translate(521 124) rotate(38)">Thánh Gióng</text>
          <text transform="translate(633 196) rotate(38)">Thánh Gióng</text>
          <text class="border" transform="translate(453 42) rotate(70)">ường Bình Thắng</text>
          <text transform="translate(553 219) rotate(-56)">Tạ Quang Bửu</text>
          <text transform="translate(794 138) rotate(50)">Thống Nhất</text>
          <text class="site" x="793" y="84">Depot Nam</text><text class="site" x="793" y="96">Hoa II</text>
          <text class="site farm" x="884" y="48">Phân viện</text><text class="site farm" x="884" y="60">Chăn nuôi</text><text class="site farm" x="884" y="72">Nam Bộ</text>
          <text transform="translate(773 222) rotate(38)">Đường số 2</text>
          <text transform="translate(757 240) rotate(38)">Đường số 1</text>
          <text transform="translate(859 251) rotate(-57)">Quốc lộ 1</text>
          <text class="site" x="701" y="281">Khu Dân</text><text class="site" x="701" y="292">cư 61</text>
          <text class="area" x="606" y="296">Sân banh</text>
          <text class="station" x="826" y="329">Bến Xe</text><text class="station" x="826" y="342">Suối Tiên</text>
          <text class="sight" x="67" y="320">Dốc Shakespeare</text>
          <text transform="translate(51 348) rotate(-17)">Marie Curie</text>
          <text transform="translate(158 374) rotate(58)">William Shakespeare</text>
          <text transform="translate(94 380) rotate(-90)">Đường số 1</text>
          <text transform="translate(94 467) rotate(-90)">Đường số 1</text>
          <text x="36" y="423">Đường số 4</text><text x="140" y="423">Đường số 4</text>
          <text transform="translate(25 448) rotate(90)">Đường số 2</text>
          <text x="52" y="501">Đường số 5</text>
          <text transform="translate(241 518) rotate(-87)">Lưu Hữu Phước</text>
          <text transform="translate(331 520) rotate(-87)">Nguyễn Văn Huyên</text>
          <text transform="translate(461 369) rotate(-55)">Tạ Quang Bửu</text>
          <text transform="translate(599 369) rotate(-56)">Nguyễn Bỉnh Khiêm</text>
          <text class="suburb" x="641" y="385">Tân Lập</text>
          <text transform="translate(721 352) rotate(-50)">Đường Tân Lập</text>
          <text transform="translate(770 379) rotate(-56)">Quốc lộ 1</text>
          <text transform="translate(649 473) rotate(-53)">Song hành Xa lộ Hà Nội</text>
          <text transform="translate(677 508) rotate(-53)">Quốc lộ 1</text>
          <text transform="translate(837 392) rotate(45)">Đường số 13</text>
          <text transform="translate(404 550) rotate(-60)">áng tạo</text>
          <text class="parking" x="382" y="261">P</text>
        </g>
        <path d="M465 291q4-17 14-20 10-1 5 5-4 5-12 7z" fill="#000" opacity=".65"/>
        <path d="M464 288c0-9-10-14-10-23a10 10 0 0 1 20 0c0 9-10 14-10 23z" fill="#fe7569" stroke="#5a2a26"/>
        <circle cx="464" cy="264" r="4"/>
        <text class="marker-label" x="464" y="246">Classroom Device IoT</text>
      </svg>
      <div class="zoom"><button aria-label="Zoom in">+</button><button aria-label="Zoom out">−</button></div>
      <p class="credit"><svg viewBox="0 0 12 8"><path d="M0 0h12v4H0z" fill="#4c7be1"/><path d="M0 4h12v4H0z" fill="#ffd500"/></svg><a href="#leaflet">Leaflet</a> | © <a href="#osm">OpenStreetMap</a> contributors</p>
    </div>
  </article>

  <article class="card w8 h5 table-card">
    <header class="bar">
      <h2 class="title">Entities</h2>
      <div class="tools">
        <button aria-label="Search"><svg><use href="#i-search"/></svg></button>
        <button aria-label="Columns"><svg><use href="#i-columns"/></svg></button>
        <button aria-label="Export"><svg><use href="#i-export"/></svg></button>
        <button aria-label="Fullscreen"><svg><use href="#i-full"/></svg></button>
      </div>
    </header>
    <table class="entities">
      <colgroup><col class="e1"><col class="e2"><col class="e3"><col></colgroup>
      <thead><tr><th>LED Status</th><th>FAN Status</th><th>LED Blink</th><th>FAN Speed</th></tr></thead>
      <tbody><tr><td>ON</td><td>OFF</td><td>OFF</td><td>0 PWM</td></tr></tbody>
    </table>
    <div class="filler"></div>
    <footer class="pager">
      <label for="ps1">Items per page:</label>
      <span class="select"><select id="ps1"><option>10</option></select><svg><use href="#i-caret"/></svg></span>
      <span class="range">1 – 1 of 1</span>
      <button aria-label="First page"><svg><use href="#i-first"/></svg></button><button aria-label="Previous page"><svg><use href="#i-prev"/></svg></button><button aria-label="Next page"><svg><use href="#i-next"/></svg></button><button aria-label="Last page"><svg><use href="#i-last"/></svg></button>
    </footer>
  </article>

  <article class="card w4 h5 fan">
    <label class="fan-title" for="fan">Fan Speed</label>
    <output class="fan-value" for="fan">N/A</output>
    <input class="fan-range" id="fan" type="range" min="0" max="254" value="127">
    <div class="fan-scale"><span>0</span><span>255</span></div>
    <div class="progress"><span></span></div>
  </article>
</section>

<section class="group">
  <article class="card w6 h2 reading">
    <svg class="temp"><use href="#i-thermo"/></svg>
    <div class="about"><h2>Temperature</h2><p>Last update 1d ago</p></div>
    <strong>27.17 °C</strong>
  </article>
  <article class="card w9 h6 chart">
    <header><div><h2>Line chart Temperature &amp; Humidity</h2><p>Realtime - last 1 minute</p></div>
      <div class="tools"><button aria-label="Export"><svg><use href="#i-export"/></svg></button><button aria-label="Fullscreen"><svg><use href="#i-full"/></svg></button></div></header>
    <p class="agg">Avg</p>
    <ul class="legend"><li class="blue">Temperature</li><li class="green">Humidity</li></ul>
    <svg class="plot"><use href="#chart-grid"/></svg>
    <svg class="ticks"><use href="#chart-grid"/></svg>
    <div class="times"><span>21:10:30</span><span>21:10:35</span><span>21:10:40</span><span>21:10:45</span><span>21:10:50</span><span>21:10:55</span><b>21:11</b><span>21:11:05</span><span>21:11:10</span><span>21:11:15</span><span>21:11:20</span><span>21:11:25</span></div>
    <div class="window"><i></i><i></i></div>
  </article>
  <article class="card w9 h6 chart">
    <header><div><h2>Line chart Light Value</h2><p>Realtime - last 1 minute</p></div>
      <div class="tools"><button aria-label="Export"><svg><use href="#i-export"/></svg></button><button aria-label="Fullscreen"><svg><use href="#i-full"/></svg></button></div></header>
    <p class="agg">Avg</p>
    <ul class="legend"><li class="yellow">Light Value</li></ul>
    <svg class="plot"><use href="#chart-grid"/></svg>
    <svg class="ticks"><use href="#chart-grid"/></svg>
    <div class="times"><span>21:10:30</span><span>21:10:35</span><span>21:10:40</span><span>21:10:45</span><span>21:10:50</span><span>21:10:55</span><b>21:11</b><span>21:11:05</span><span>21:11:10</span><span>21:11:15</span><span>21:11:20</span><span>21:11:25</span></div>
    <div class="window"><i></i><i></i></div>
  </article>
  <article class="card w6 h2 reading">
    <svg class="humid"><use href="#i-drop"/></svg>
    <div class="about"><h2>Humidity</h2><p>Last update 1d ago</p></div>
    <strong>71.8 %</strong>
  </article>
  <article class="card w6 h2 reading">
    <svg class="light"><use href="#i-bulb"/></svg>
    <div class="about"><h2>Light Sensor</h2><p>Last update 1d ago</p></div>
    <strong>39 ADC</strong>
  </article>
</section>

<section class="group">
  <article class="card w4 h3 sensor gas"><div class="head"><svg><use href="#i-fire"/></svg><div><h2>H2</h2><p>Last update 1d ago</p></div></div><strong>0.04 ppm</strong></article>
  <article class="card w4 h3 sensor gas"><div class="head"><svg><use href="#i-fire"/></svg><div><h2>CO_MQ2</h2><p></p></div></div><strong>N/A</strong></article>
  <article class="card w16 h9 chart">
    <header><div><h2>Line chart Gas Dectection by MQ-2 Sensor</h2><p>Realtime - last 1 minute</p></div>
      <div class="tools"><button aria-label="Export"><svg><use href="#i-export"/></svg></button><button aria-label="Fullscreen"><svg><use href="#i-full"/></svg></button></div></header>
    <p class="agg">Avg</p>
    <ul class="legend"><li class="blue">H2</li><li class="green">CO</li><li class="red">LPG</li><li class="amber">Alcohol</li><li class="violet">Propane</li></ul>
    <svg class="plot"><use href="#chart-grid"/></svg>
    <svg class="ticks"><use href="#chart-grid"/></svg>
    <div class="times"><span>21:10:30</span><span>21:10:35</span><span>21:10:40</span><span>21:10:45</span><span>21:10:50</span><span>21:10:55</span><b>21:11</b><span>21:11:05</span><span>21:11:10</span><span>21:11:15</span><span>21:11:20</span><span>21:11:25</span></div>
    <div class="window"><i></i><i></i></div>
  </article>
  <article class="card w4 h3 sensor gas"><div class="head"><svg><use href="#i-fire"/></svg><div><h2>LPG</h2><p>Last update 1d ago</p></div></div><strong>0 ppm</strong></article>
  <article class="card w4 h3 sensor gas"><div class="head"><svg><use href="#i-fire"/></svg><div><h2>Alcohol_MQ2</h2><p></p></div></div><strong>N/A</strong></article>
  <article class="card w4 h3 sensor gas"><div class="head"><svg><use href="#i-fire"/></svg><div><h2>Propane</h2><p>Last update 1d ago</p></div></div><strong>0 ppm</strong></article>
  <article class="card w4 h3 sensor gas"><div class="head"><svg><use href="#i-fire"/></svg><div><h2>Gas Detection<br>Status</h2><p></p></div></div><strong>N/A</strong></article>
</section>

<section class="group">
  <article class="card w4 h3 sensor air"><div class="head"><svg><use href="#i-air"/></svg><div><h2>CO_MQ135</h2><p></p></div></div><strong>N/A</strong></article>
  <article class="card w4 h3 sensor air"><div class="head"><svg><use href="#i-air"/></svg><div><h2>Alcohol_MQ135</h2><p></p></div></div><strong>N/A</strong></article>
  <article class="card w16 h11 chart">
    <header><div><h2>Line chart Air Quality by MQ-135</h2><p>Realtime - last 1 minute</p></div>
      <div class="tools"><button aria-label="Export"><svg><use href="#i-export"/></svg></button><button aria-label="Fullscreen"><svg><use href="#i-full"/></svg></button></div></header>
    <p class="agg">Avg</p>
    <ul class="legend"><li class="blue">CO</li><li class="green">CO2</li><li class="red">NH4</li><li class="amber">Alcohol</li><li class="magenta">Toluene</li><li class="maroon">Acetone</li></ul>
    <svg class="plot"><use href="#chart-grid"/></svg>
    <svg class="ticks"><use href="#chart-grid"/></svg>
    <div class="times"><span>21:10:30</span><span>21:10:35</span><span>21:10:40</span><span>21:10:45</span><span>21:10:50</span><span>21:10:55</span><b>21:11</b><span>21:11:05</span><span>21:11:10</span><span>21:11:15</span><span>21:11:20</span><span>21:11:25</span></div>
    <div class="window"><i></i><i></i></div>
  </article>
  <article class="card w4 h3 sensor air"><div class="head"><svg><use href="#i-air"/></svg><div><h2>CO2</h2><p></p></div></div><strong>N/A</strong></article>
  <article class="card w4 h3 sensor air"><div class="head"><svg><use href="#i-air"/></svg><div><h2>Toluene</h2><p></p></div></div><strong>N/A</strong></article>
  <article class="card w4 h3 sensor air"><div class="head"><svg><use href="#i-air"/></svg><div><h2>NH4</h2><p></p></div></div><strong>N/A</strong></article>
  <article class="card w4 h3 sensor air"><div class="head"><svg><use href="#i-air"/></svg><div><h2>Acetone</h2><p></p></div></div><strong>N/A</strong></article>
  <article class="card w8 h2 reading quality">
    <svg><use href="#i-air"/></svg>
    <div class="about"><h2>Air Quality</h2><p></p></div>
    <strong>N/A</strong>
  </article>
</section>

<section class="group">
  <article class="card w10 h6 table-card">
    <header class="bar">
      <h2 class="title raised">Alarms Temperature</h2>
      <div class="tools">
        <button aria-label="Search"><svg><use href="#i-search"/></svg></button>
        <button aria-label="Filter"><svg><use href="#i-filter"/></svg></button>
        <button aria-label="Columns"><svg><use href="#i-columns"/></svg></button>
        <button aria-label="Export"><svg><use href="#i-export"/></svg></button>
        <button aria-label="Fullscreen"><svg><use href="#i-full"/></svg></button>
      </div>
    </header>
    <button class="timewindow"><svg><use href="#i-clock"/></svg>Realtime - last day</button>
    <table class="alarms">
      <colgroup><col class="a0"><col class="a1"><col class="a2"><col class="a3"><col class="a4"><col></colgroup>
      <thead><tr><th class="pick"><input type="checkbox" aria-label="Select all alarms"></th><th>Created time <svg class="sort"><use href="#i-down"/></svg></th><th>Type</th><th>Severity</th><th>Status</th><th>Assignee</th></tr></thead>
    </table>
    <p class="filler empty">No alarms found</p>
    <footer class="pager">
      <label for="ps2">Items per page:</label>
      <span class="select"><select id="ps2"><option>10</option></select><svg><use href="#i-caret"/></svg></span>
      <span class="range">1 – 0 of 0</span>
      <button aria-label="First page"><svg><use href="#i-first"/></svg></button><button aria-label="Previous page"><svg><use href="#i-prev"/></svg></button><button aria-label="Next page"><svg><use href="#i-next"/></svg></button><button aria-label="Last page"><svg><use href="#i-last"/></svg></button>
    </footer>
  </article>

  <article class="card w14 h6 table-card">
    <header class="sched-head">
      <h2>Scheduler events</h2>
      <div class="tabs"><button class="on" aria-label="List view"><svg><use href="#i-list"/></svg></button><button aria-label="Calendar view"><svg><use href="#i-event"/></svg></button></div>
      <div class="tools">
        <button aria-label="Add event"><svg><use href="#i-plus"/></svg></button>
        <button aria-label="Search"><svg><use href="#i-search"/></svg></button>
        <button aria-label="Refresh"><svg><use href="#i-refresh"/></svg></button>
        <button aria-label="Fullscreen"><svg><use href="#i-full"/></svg></button>
      </div>
    </header>
    <table class="events">
      <colgroup><col class="s0"><col class="s1"><col class="s2"><col><col class="s4"></colgroup>
      <thead><tr><th class="pick"><input type="checkbox" aria-label="Select all events"></th><th>Name <svg class="sort"><use href="#i-up"/></svg></th><th>Type</th><th>Created by customer</th><th></th></tr></thead>
      <tbody>
        <tr><td class="pick"><input type="checkbox" aria-label="Select Turn off LED"></td><td>Turn off LED</td><td>Update Attributes</td><td></td><td class="acts"><div><button aria-label="Toggle"><svg><use href="#i-toggle"/></svg></button><button aria-label="Edit"><svg><use href="#i-edit"/></svg></button><button aria-label="Delete"><svg><use href="#i-trash"/></svg></button></div></td></tr>
        <tr><td class="pick"><input type="checkbox" aria-label="Select Turn on LED"></td><td>Turn on LED</td><td>Update Attributes</td><td></td><td class="acts"><div><button aria-label="Toggle"><svg><use href="#i-toggle"/></svg></button><button aria-label="Edit"><svg><use href="#i-edit"/></svg></button><button aria-label="Delete"><svg><use href="#i-trash"/></svg></button></div></td></tr>
      </tbody>
    </table>
    <div class="filler"></div>
    <footer class="pager dark">
      <label for="ps3">Items per page:</label>
      <span class="select"><select id="ps3"><option>10</option></select><svg><use href="#i-caret"/></svg></span>
      <span class="range">1 – 2 of 2</span>
      <button aria-label="Previous page"><svg><use href="#i-prev"/></svg></button><button aria-label="Next page"><svg><use href="#i-next"/></svg></button>
    </footer>
  </article>
</section>
</main>
</body>
</html>
```
FILE: styles.css
```css
:root {
  --cell: calc((100vw - 250px) / 24);
  --ink: #212121;
  --muted: #757575;
}
* { box-sizing: border-box; }
body { margin: 0; background: #eee; color: var(--ink); font-family: Roboto, sans-serif; font-size: 14px; }
h2, p, ul { margin: 0; padding: 0; font-weight: 400; }
button { padding: 0; border: 0; background: none; color: inherit; font: inherit; cursor: pointer; }
svg { display: block; fill: currentColor; }
.defs { position: absolute; width: 0; height: 0; }

/* dashboard grid: 24 columns of square cells */
.dashboard { display: grid; gap: calc(var(--cell) + 20px); padding: 10px 10px 0; }
.group { display: grid; grid-template-columns: repeat(24, minmax(0, 1fr)); grid-auto-rows: minmax(var(--cell), auto); gap: 10px; }
.card { display: flex; flex-direction: column; min-width: 0; min-height: 0; background: #fff; box-shadow: 0 3px 1px -2px rgba(0,0,0,.2), 0 2px 5px rgba(0,0,0,.24), 0 1px 10px rgba(0,0,0,.1); }
.w4 { grid-column: span 4; } .w6 { grid-column: span 6; } .w8 { grid-column: span 8; } .w9 { grid-column: span 9; }
.w10 { grid-column: span 10; } .w12 { grid-column: span 12; } .w14 { grid-column: span 14; } .w16 { grid-column: span 16; }
.h2 { grid-row: span 2; } .h3 { grid-row: span 3; } .h5 { grid-row: span 5; } .h6 { grid-row: span 6; }
.h8 { grid-row: span 8; } .h9 { grid-row: span 9; } .h11 { grid-row: span 11; }

.tools { display: flex; gap: 12px; margin-left: auto; }
.tools svg { width: 20px; height: 20px; }
.bar { display: flex; align-items: center; height: 50px; padding: 0 6px 0 15px; }
.title { font-size: 16px; }
.raised { padding-bottom: 4px; }

/* rocker switches */
.switch { background: #e6e7e8; font-family: "DejaVu Sans", sans-serif; }
.switch-title { font-size: 46px; line-height: 66px; text-align: center; color: #777; white-space: nowrap; }
.switch-title.small { font-size: 37px; }
.switch-btn { display: block; margin: 4px 11px 0; }
.switch-btn svg { width: 100%; height: 103px; }
.switch-state { padding-left: 30px; font-size: 52px; line-height: 54px; color: #b7b5b5; }

/* map */
.map-card { padding: 0 8px 8px; }
.map-bar { height: 45px; padding: 8px 5px 0 5px; }
.map-bar .title { padding-bottom: 6px; }
.map { position: relative; flex: 1; overflow: hidden; min-height: 300px; }
.map-art { position: absolute; inset: 0; width: 100%; height: 100%; }
.terrain path { vector-effect: non-scaling-stroke; }
.lines path { fill: none; stroke-linejoin: round; }
.water { fill: #aad3df; } .wood { fill: #add19e; } .grass { fill: #cdebb0; } .brown { fill: #c7c7b4; }
.pitch { fill: #88e0be; } .resid { fill: #e0dfdf; } .campus { fill: #ffffe5; } .bldg { fill: #d9d0c9; stroke: #c3b5ab; }
.foot { fill: none; stroke: #f77f70; stroke-width: 2; stroke-dasharray: 2 3; }
.track { fill: none; stroke: #ac8331; stroke-width: 2; stroke-dasharray: 5 3; }
.wave { fill: none; stroke: #57a9e0; stroke-width: 1; stroke-dasharray: 5 3; }
.boundary { fill: none; stroke: #c4aec6; stroke-width: 2; stroke-dasharray: 6 3 2 3; }
.purple { fill: none; stroke: #a27ca0; stroke-width: 3; opacity: .7; }
.trees { fill: none; stroke: #8dbb82; }
.arrows { fill: #444; }
.stops { fill: #0092da; }
.labels { font-family: "Noto Sans", sans-serif; font-size: 10px; text-anchor: middle; fill: #222; stroke: #fff; stroke-width: 2px; stroke-opacity: .7; paint-order: stroke; }
.labels .lake { font-style: italic; fill: #4d80b3; }
.labels .area { font-style: italic; fill: #4d7a5c; }
.labels .border { fill: #8d618b; }
.labels .site { font-style: italic; fill: #666; }
.labels .farm { fill: #8a4a55; }
.labels .sight { fill: #734a08; }
.labels .station { font-size: 11px; font-weight: 700; fill: #4e62c0; }
.labels .suburb { font-size: 14px; fill: #777; }
.labels .parking { font-size: 15px; fill: #0092da; }
.marker-label { font: 700 12px "Liberation Sans", sans-serif; text-anchor: middle; fill: #333; }
.zoom { position: absolute; left: 10px; top: 10px; display: grid; border: 2px solid rgba(0,0,0,.25); border-radius: 4px; background-clip: padding-box; }
.zoom button { width: 30px; height: 30px; background: #fff; font: 700 20px/30px "Liberation Sans", sans-serif; color: #000; }
.zoom button + button { border-top: 1px solid #ccc; }
.credit { position: absolute; right: 0; bottom: 0; display: flex; gap: 3px; align-items: center; padding: 0 5px; background: rgba(255,255,255,.8); font: 12px/17px "Liberation Sans", sans-serif; color: #333; }
.credit svg { width: 12px; height: 8px; }
.credit a { color: #0078a8; text-decoration: none; }

/* tables */
.table-card { padding: 0 4px; }
table { width: 100%; border-collapse: collapse; table-layout: fixed; }
th, td { height: 52px; padding: 0 0 0 12px; border-bottom: 1px solid #e0e0e0; text-align: left; }
th { font-size: 14px; font-weight: 500; color: var(--muted); }
td { font-size: 13px; }
.entities { margin-top: -3px; }
.entities th { padding-bottom: 4px; }
.e1 { width: 168px; } .e2 { width: 157px; } .e3 { width: 127px; }
.a0 { width: 64px; } .a1 { width: 174px; } .a2 { width: 80px; } .a3 { width: 110px; } .a4 { width: 98px; }
.s0 { width: 68px; } .s1 { width: 262px; } .s2 { width: 275px; } .s4 { width: 154px; }
.events th { color: var(--ink); }
th.pick, td.pick { padding-left: 23px; }
.pick input { appearance: none; display: block; width: 18px; height: 18px; margin: 0; border: 2px solid var(--muted); border-radius: 2px; background: #fff; }
.sort { display: inline-block; width: 12px; height: 12px; margin-left: 4px; vertical-align: -1px; color: #616161; }
.acts div { display: flex; gap: 24px; color: var(--muted); }
.acts svg { width: 24px; height: 24px; }
.filler { flex: 1; }
.empty { display: flex; align-items: center; justify-content: center; font: 16px "Noto Sans", sans-serif; }
.timewindow { display: flex; align-items: center; gap: 5px; height: 24px; margin: -6px 0 4px 5px; font: 15px "Noto Sans", sans-serif; color: #444; }
.timewindow svg { width: 24px; height: 24px; }
.pager { display: flex; align-items: center; justify-content: flex-end; height: 61px; padding: 0 8px 4px 0; border-top: 1px solid #e0e0e0; font-size: 12px; color: #757575; }
.pager.dark { color: #424242; }
.select { position: relative; width: 83px; height: 41px; margin: 0 37px 0 9px; }
.select select { appearance: none; width: 100%; height: 100%; padding: 0 0 0 15px; border: 1px solid #9e9e9e; border-radius: 4px; background: #fff; font: inherit; color: inherit; }
.select svg { position: absolute; right: 15px; top: 19px; width: 10px; height: 5px; color: #666; pointer-events: none; }
.range { margin-right: 34px; }
.pager button { width: 48px; height: 48px; color: #d0d0d0; }
.pager button svg { width: 24px; height: 24px; margin: auto; }

.sched-head { display: flex; height: 72px; padding: 0 6px 0 24px; }
.sched-head h2 { font-size: 20px; line-height: 72px; }
.sched-head .tools { padding: 14px 4px 0 0; }
.sched-head .tools button { height: 20px; }
.tabs { display: flex; margin: 12px 0 0 20px; }
.tabs button { width: 48px; height: 48px; border-bottom: 4px solid transparent; color: var(--muted); }
.tabs svg { width: 24px; height: 24px; margin: auto; }
.tabs .on { color: #ff6e40; border-color: #ff6e40; }

/* fan speed slider */
.fan { padding-top: 29px; }
.fan-title { padding-left: 29px; font-size: 16px; line-height: 24px; font-weight: 500; }
.fan-value { margin-top: 116px; font-size: 36px; line-height: 48px; font-weight: 500; text-align: center; }
.fan-range { appearance: none; height: 16px; margin: 1px 24px 0; background:
  linear-gradient(#9fa3b8, #9fa3b8) left / 50% 6px no-repeat,
  repeating-linear-gradient(90deg, transparent 0 24px, #a9adc4 24px 26px) right / 50% 3px no-repeat,
  linear-gradient(#d5d7e6, #d5d7e6) right / 50% 4px no-repeat; }
.fan-range::-webkit-slider-thumb { appearance: none; width: 16px; height: 16px; border-radius: 50%; background: #9a9fb5; box-shadow: 0 1px 2px rgba(0,0,0,.3); }
.fan-scale { display: flex; justify-content: space-between; padding: 0 24px; font-size: 12px; line-height: 14px; color: #888; }
.progress { display: flex; justify-content: flex-end; height: 4px; margin-top: auto; background: #ffccbc; }
.progress span { width: 22px; background: #ff5722; }

/* value readings */
.reading { flex-direction: row; align-items: center; padding: 0 24px; }
.reading > svg { flex: none; width: 52px; height: 52px; margin-right: 11px; }
.about { flex: 1; min-width: 0; font-weight: 500; }
.reading h2 { font-size: 21px; line-height: 28px; font-weight: 500; }
.reading p { min-height: 24px; font-size: 17px; line-height: 24px; font-weight: 500; color: #a6a6a6; }
.reading strong { flex: none; margin-left: 40px; font-size: 46px; line-height: 56px; font-weight: 500; white-space: nowrap; }
.temp { color: #5469ff; } .humid { color: #8bc34a; } .light { color: #f7df00; }
.quality > svg { width: 72px; height: 72px; margin-right: 14px; color: #80c4eb; }
.quality h2 { font-size: 30px; line-height: 42px; }
.quality p { min-height: 34px; }
.quality strong { font-size: 66px; line-height: 72px; }

.sensor { align-items: center; justify-content: space-evenly; padding: 24px 0; }
.head { display: flex; align-items: center; gap: 8px; }
.head svg { width: 45px; height: 45px; }
.sensor h2 { font-size: 19px; line-height: 28px; font-weight: 500; }
.sensor p { min-height: 20px; font-size: 15px; line-height: 20px; font-weight: 500; color: #a6a6a6; }
.sensor strong { font-size: 59px; line-height: 88px; font-weight: 500; white-space: nowrap; }
.gas svg { color: #f44336; } .air svg { color: #80c4eb; }

/* charts */
.chart { padding: 10px 17px 15px; }
.chart header { display: flex; height: 50px; margin: 0 1px 0 -5px; }
.chart h2 { font-size: 17px; line-height: 26px; font-weight: 500; }
.chart header p { font-size: 12px; line-height: 16px; color: #b0b0b0; }
.chart .tools { padding-top: 12px; }
.chart .tools button { height: 20px; }
.agg { margin: 0 -4px 0 0; font-size: 12px; line-height: 18px; text-align: right; color: #9e9e9e; }
.legend { margin: 4px 0 14px -4px; list-style: none; font-size: 12px; line-height: 25px; color: #424242; }
.legend li { display: flex; align-items: center; gap: 4px; }
.legend li::before { content: ""; width: 8px; height: 8px; border-radius: 50%; background: var(--dot); }
.blue { --dot: #2196f3; } .green { --dot: #4caf50; } .red { --dot: #f44336; } .amber { --dot: #ffc107; }
.yellow { --dot: #f7df00; } .violet { --dot: #673ab7; } .magenta { --dot: #9c27b0; } .maroon { --dot: #6d1035; }
.plot { flex: 1; width: 100%; height: 0; min-height: 100px; border-right: 1px solid #e0e0e0; border-bottom: 1px solid #616161; stroke: #e0e0e0; shape-rendering: crispEdges; }
.ticks { flex: none; width: 100%; height: 5px; stroke: #616161; shape-rendering: crispEdges; }
.times { display: grid; grid-template-columns: 1fr repeat(12, 10fr); width: calc(100% + 5px); font-size: 10px; line-height: 18px; text-align: center; color: #8a8a8a; white-space: nowrap; }
.times span:first-child { grid-column: 2; }
.times b { font-size: 12px; color: #757575; }
.window { display: flex; flex: none; justify-content: space-between; height: 37px; margin: 7px -2px 0 4px; border: 1px solid #d3dcef; border-top: 7px solid #dde4f2; background: #e7eefe; }
.window i { width: 6px; height: 19px; margin: 5px -4px; border: 1px solid #acb8d1; border-radius: 2px; background: #fff; }
```
